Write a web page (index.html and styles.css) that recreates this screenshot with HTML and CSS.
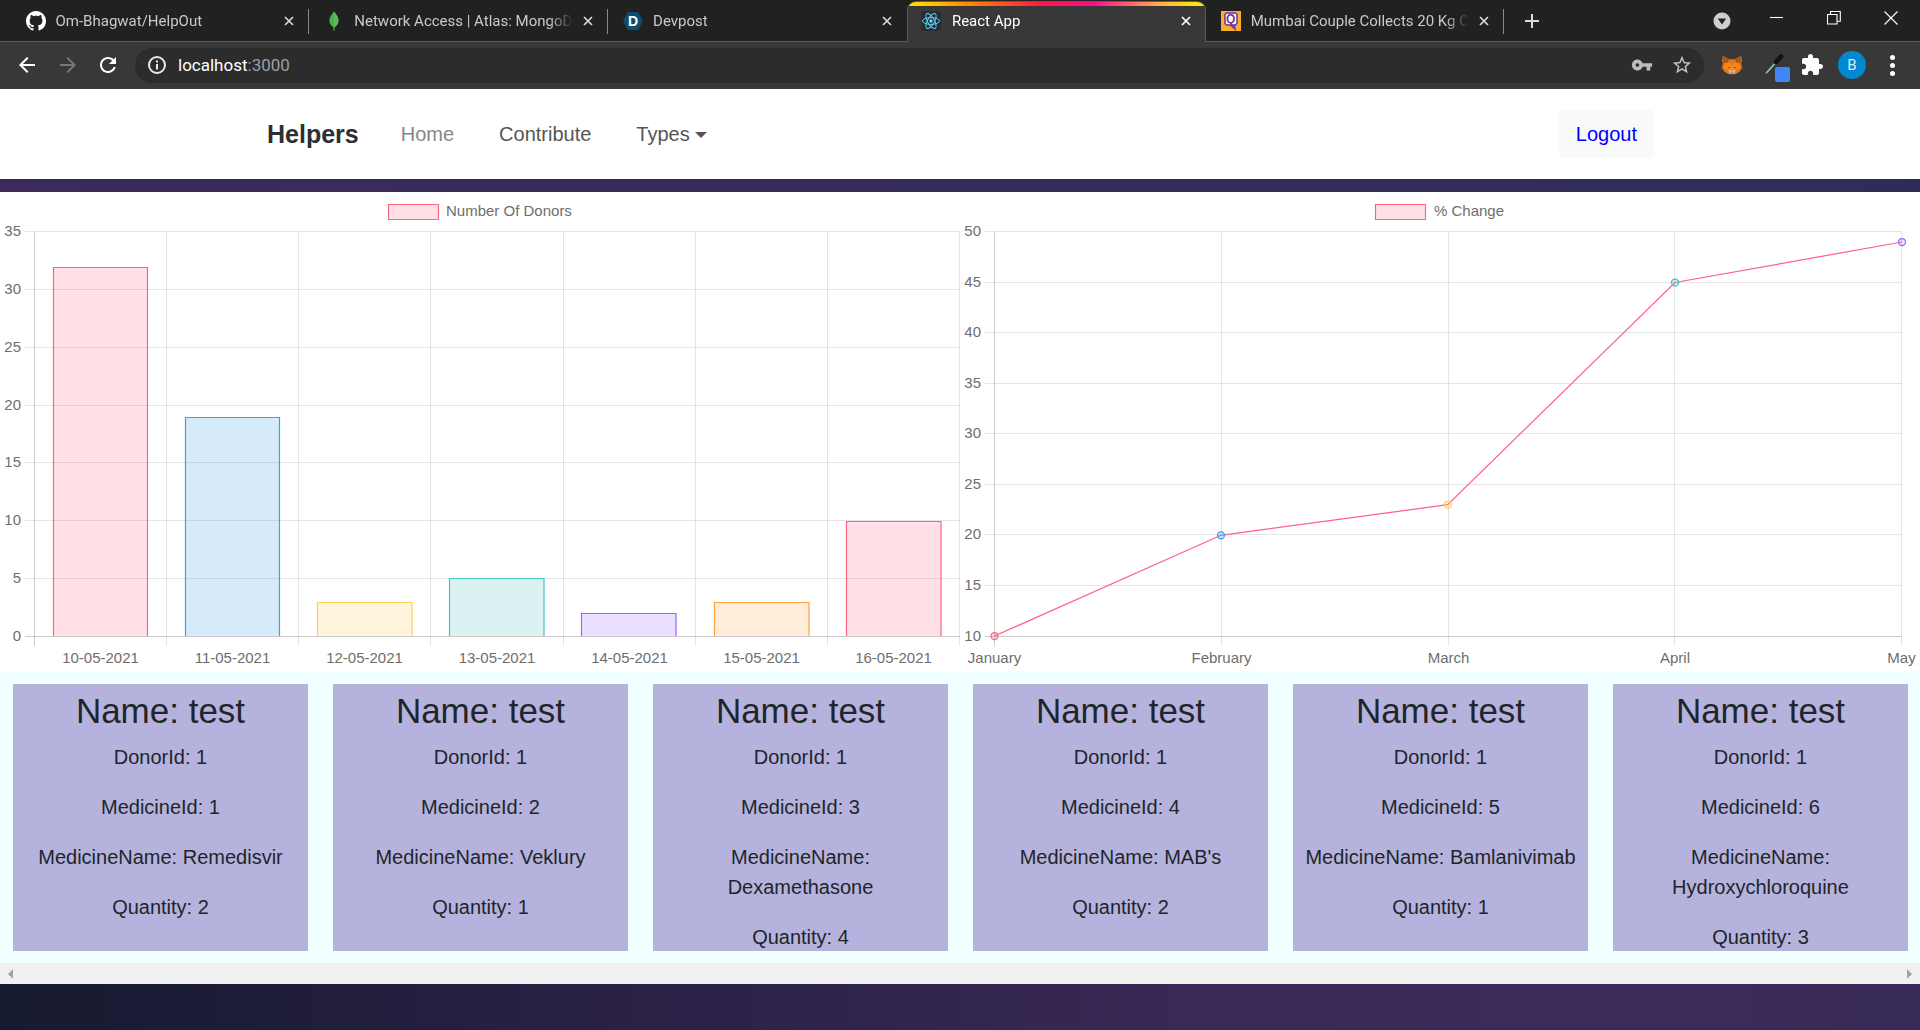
FILE: index.html
```html
<!DOCTYPE html>
<html lang="en">
<head>
<meta charset="utf-8">
<title>React App</title>
<link rel="stylesheet" href="styles.css">
</head>
<body>
<header class="browser">
  <div class="tabstrip">
    <div class="tab sep">
      <svg class="favicon" viewBox="0 0 16 16"><path fill="#fff" d="M8 0C3.58 0 0 3.58 0 8c0 3.54 2.29 6.53 5.47 7.59.4.07.55-.17.55-.38 0-.19-.01-.82-.01-1.49-2.01.37-2.53-.49-2.69-.94-.09-.23-.48-.94-.82-1.13-.28-.15-.68-.52-.01-.53.63-.01 1.08.58 1.23.82.72 1.21 1.87.87 2.33.66.07-.52.28-.87.51-1.07-1.78-.2-3.64-.89-3.64-3.95 0-.87.31-1.59.82-2.15-.08-.2-.36-1.02.08-2.12 0 0 .67-.21 2.2.82.64-.18 1.32-.27 2-.27.68 0 1.36.09 2 .27 1.53-1.04 2.2-.82 2.2-.82.44 1.1.16 1.92.08 2.12.51.56.82 1.27.82 2.15 0 3.07-1.87 3.75-3.65 3.95.29.25.54.73.54 1.48 0 1.07-.01 1.93-.01 2.2 0 .21.15.46.55.38A8.013 8.013 0 0016 8c0-4.42-3.58-8-8-8z"/></svg>
      <span class="tab-title">Om-Bhagwat/HelpOut</span>
      <svg class="tab-close" viewBox="0 0 10 10"><path d="M1 1l8 8M9 1l-8 8"/></svg>
    </div>
    <div class="tab sep">
      <svg class="favicon" viewBox="0 0 20 20"><path fill="#4caf50" d="M10 0c.6 2 4.6 5 4.6 9.6 0 3.6-2.6 6-3.9 6.7L10.400 20h-.8l-.3-3.700C8 15.600 5.400 13.200 5.400 9.600 5.400 5 9.400 2 10 0z"/><path fill="#7cc36a" d="M10 0c.3 3 .3 12 .1 17 2-2 4.500-4 4.500-7.400C14.600 5 10.600 2 10 0z" opacity=".5"/></svg>
      <span class="tab-title">Network Access | Atlas: MongoD</span>
      <svg class="tab-close" viewBox="0 0 10 10"><path d="M1 1l8 8M9 1l-8 8"/></svg>
    </div>
    <div class="tab">
      <span class="favicon fav-devpost">
        <svg class="fav-shape" viewBox="0 0 20 20"><path fill="#0f4d6e" d="M5 1h10l5 9-5 9H5L0 10z"/></svg>
        <b class="fav-letter">D</b>
      </span>
      <span class="tab-title">Devpost</span>
      <svg class="tab-close" viewBox="0 0 10 10"><path d="M1 1l8 8M9 1l-8 8"/></svg>
    </div>
    <div class="tab tab-active">
      <svg class="favicon" viewBox="0 0 20 20"><rect width="20" height="20" rx="2" fill="#282c34"/><g fill="none" stroke="#61dafb" stroke-width=".9"><ellipse cx="10" cy="10" rx="8.500" ry="3.400"/><ellipse cx="10" cy="10" rx="8.500" ry="3.400" transform="rotate(60 10 10)"/><ellipse cx="10" cy="10" rx="8.500" ry="3.400" transform="rotate(120 10 10)"/></g><circle cx="10" cy="10" r="1.700" fill="#61dafb"/></svg>
      <span class="tab-title">React App</span>
      <svg class="tab-close" viewBox="0 0 10 10"><path d="M1 1l8 8M9 1l-8 8"/></svg>
    </div>
    <div class="tab sep">
      <span class="favicon fav-quint">
        <svg class="fav-shape" viewBox="0 0 20 20"><rect width="20" height="20" fill="#f5b02e"/><path fill="#fff" stroke="#7b2d9b" stroke-width="1.500" d="M5.500 2h9l1.500 1.500v9L14.500 14H13l1 4-4.500-4h-4L4 12.500v-9z"/></svg>
        <b class="fav-q">Q</b>
      </span>
      <span class="tab-title">Mumbai Couple Collects 20 Kg C</span>
      <svg class="tab-close" viewBox="0 0 10 10"><path d="M1 1l8 8M9 1l-8 8"/></svg>
    </div>
    <svg class="newtab" viewBox="0 0 16 16"><path d="M8 1v14M1 8h14"/></svg>
    <div class="win-group">
      <svg class="tabsearch" viewBox="0 0 18 18"><circle cx="9" cy="9" r="8.500" fill="#cfcfcf"/><path d="M4.800 6.600h8.400L9 12.600z" fill="#222"/></svg>
      <span class="win-btn"><svg class="win-ic" viewBox="0 0 14 14"><path d="M1 6.500h13"/></svg></span>
      <span class="win-btn"><svg class="win-ic" viewBox="0 0 14 14"><path d="M.5 3.500h9.500v9.500H.5zM3.500 3.500v-3h9.800v9.800h-3.300"/></svg></span>
      <span class="win-btn"><svg class="win-ic" viewBox="0 0 14 14"><path d="M.5 .5l13 13M13.500 .5l-13 13"/></svg></span>
    </div>
  </div>
  <div class="toolbar">
    <span class="tool"><svg class="ic" viewBox="0 0 24 24"><path fill="#fff" d="M20 11H7.830l5.590-5.590L12 4l-8 8 8 8 1.410-1.410L7.830 13H20v-2z"/></svg></span>
    <span class="tool"><svg class="ic" viewBox="0 0 24 24"><path fill="#777" d="M4 11h12.170l-5.590-5.590L12 4l8 8-8 8-1.410-1.410L16.170 13H4v-2z"/></svg></span>
    <span class="tool"><svg class="ic" viewBox="0 0 24 24"><path fill="#fff" d="M17.650 6.350C16.200 4.900 14.210 4 12 4c-4.420 0-7.990 3.580-7.990 8s3.570 8 7.990 8c3.730 0 6.840-2.550 7.730-6h-2.080c-.82 2.330-3.040 4-5.650 4-3.310 0-6-2.690-6-6s2.690-6 6-6c1.660 0 3.140.69 4.220 1.780L13 11h7V4l-2.350 2.350z"/></svg></span>
    <div class="omnibox">
      <svg class="info" viewBox="0 0 20 20"><circle cx="10" cy="10" r="8" fill="none" stroke="#e8e8e8" stroke-width="2"/><path fill="#e8e8e8" d="M9 9h2v5.500H9zM9 5.500h2v2H9z"/></svg>
      <span class="url">localhost<span class="url-port">:3000</span></span>
      <svg class="omni-ic" viewBox="0 0 24 24"><path fill="#bdbdbd" d="M12.650 10C11.830 7.670 9.610 6 7 6c-3.310 0-6 2.690-6 6s2.690 6 6 6c2.610 0 4.830-1.670 5.650-4H17v4h4v-4h2v-4H12.650zM7 14c-1.100 0-2-.9-2-2s.9-2 2-2 2 .9 2 2-.9 2-2 2z"/></svg>
      <svg class="omni-ic" viewBox="0 0 24 24"><path fill="#c4c4c4" d="M22 9.240l-7.190-.62L12 2 9.190 8.630 2 9.240l5.460 4.730L5.820 21 12 17.270 18.180 21l-1.630-7.030L22 9.240zM12 15.400l-3.760 2.270 1-4.280-3.320-2.880 4.380-.38L12 6.100l1.710 4.040 4.380.38-3.320 2.880 1 4.280L12 15.400z"/></svg>
    </div>
    <div class="extensions">
      <span class="ext">
        <svg class="ext-fox" viewBox="0 0 24 24"><path fill="#e2761b" d="M1 1l8 4h6l8-4 1 6-1 3 1 6-3 4-5 3h-8l-5-3-3-4 1-6-1-3z"/><path fill="#a9561a" d="M1 1l8 4-3 5-5-1zM23 1l-8 4 3 5 5-1z"/><path fill="#f6851b" d="M4 10l5-1 3 4 3-4 5 1 2 6-5 2-5 2-5-2-5-2z"/><path fill="#d7c1b3" d="M8 18l4 1 4-1-1 4H9z"/><path fill="#3a2a20" d="M8 14l2 1-2 1zM16 14l-2 1 2 1zM11 20h2v1h-2z"/></svg>
      </span>
      <span class="ext">
        <svg class="ext-dropper" viewBox="0 0 40 30"><path stroke="#4caf50" stroke-width="2" d="M14.700 22.700l9-10"/><path stroke="#ccc" stroke-width="1" d="M13.700 23.700l9-10"/><path stroke="#111" stroke-width="4.500" stroke-linecap="round" d="M24 12l5-5.500"/></svg>
        <i class="ext-badge"></i>
      </span>
      <span class="ext"><svg class="ic" viewBox="0 0 24 24"><path fill="#fff" d="M20.500 11H19V7c0-1.100-.9-2-2-2h-4V3.500C13 2.120 11.880 1 10.500 1S8 2.120 8 3.500V5H4c-1.100 0-1.990.9-1.990 2v3.800H3.500c1.490 0 2.700 1.210 2.700 2.700s-1.210 2.700-2.700 2.700H2V20c0 1.100.9 2 2 2h3.800v-1.500c0-1.490 1.210-2.700 2.700-2.700 1.490 0 2.700 1.210 2.700 2.700V22H17c1.100 0 2-.9 2-2v-4h1.500c1.380 0 2.500-1.120 2.500-2.500S21.880 11 20.500 11z"/></svg></span>
      <span class="ext"><span class="avatar">B</span></span>
      <span class="ext"><span class="dots"><i></i><i></i><i></i></span></span>
    </div>
  </div>
</header>

<nav class="navbar">
  <a class="brand">Helpers</a>
  <a class="nav-link muted">Home</a>
  <a class="nav-link">Contribute</a>
  <a class="nav-link dropdown">Types</a>
  <a class="logout">Logout</a>
</nav>
<div class="strip"></div>

<section class="charts">
  <svg class="chart" viewBox="0 192 960 479">
    <path class="legend-box" d="M388.500 204.500h50v15h-50z"/>
    <text class="label" x="446" y="216">Number Of Donors</text>
    <path class="grid" d="M25 231.500H960M25 289.500H960M25 347.500H960M25 405.500H960M25 462.500H960M25 520.500H960M25 578.500H960"/>
    <path class="grid" d="M166.500 232V646M298.500 232V646M430.500 232V646M563.500 232V646M695.500 232V646M827.500 232V646M959.500 232V646"/>
    <path class="axis" d="M34.500 232V646M25 636.500H960"/>
    <g class="bars">
      <path class="bar pink" d="M53.500 636V267.500H147.500V636"/>
      <path class="bar blue" d="M185.500 636V417.500H279.500V636"/>
      <path class="bar yellow" d="M317.500 636V602.500H412V636"/>
      <path class="bar teal" d="M449.500 636V578.500H544V636"/>
      <path class="bar violet" d="M581.500 636V613.500H676V636"/>
      <path class="bar orange" d="M714.500 636V602.500H809V636"/>
      <path class="bar pink" d="M846.500 636V521.500H941V636"/>
    </g>
    <g class="ylabels">
      <text x="21" y="236">35</text><text x="21" y="294">30</text><text x="21" y="352">25</text><text x="21" y="410">20</text><text x="21" y="467">15</text><text x="21" y="525">10</text><text x="21" y="583">5</text><text x="21" y="641">0</text>
    </g>
    <g class="xlabels">
      <text x="100.500" y="663">10-05-2021</text><text x="232.500" y="663">11-05-2021</text><text x="364.500" y="663">12-05-2021</text><text x="497" y="663">13-05-2021</text><text x="629.500" y="663">14-05-2021</text><text x="761.500" y="663">15-05-2021</text><text x="893.500" y="663">16-05-2021</text>
    </g>
  </svg>
  <svg class="chart" viewBox="960 192 960 479">
    <path class="legend-box" d="M1375.500 204.500h50v15h-50z"/>
    <text class="label" x="1434" y="216">% Change</text>
    <path class="grid" d="M985 231.500H1902M985 282.500H1902M985 332.500H1902M985 383.500H1902M985 433.500H1902M985 484.500H1902M985 534.500H1902M985 585.500H1902"/>
    <path class="grid" d="M1221.500 232V646M1448.500 232V646M1674.500 232V646M1901.500 232V646"/>
    <path class="axis" d="M994.500 232V646M985 636.500H1902"/>
    <path class="line" d="M994.500 636L1221 535.300L1447.700 504.700L1675 282.500L1902 242"/>
    <circle class="pt pink" cx="994.500" cy="636" r="3.500"/>
    <circle class="pt blue" cx="1221" cy="535.300" r="3.500"/>
    <circle class="pt yellow" cx="1447.700" cy="504.700" r="3.500"/>
    <circle class="pt teal" cx="1675" cy="282.500" r="3.500"/>
    <circle class="pt violet" cx="1902" cy="242" r="3.500"/>
    <g class="ylabels">
      <text x="981" y="236">50</text><text x="981" y="287">45</text><text x="981" y="337">40</text><text x="981" y="388">35</text><text x="981" y="438">30</text><text x="981" y="489">25</text><text x="981" y="539">20</text><text x="981" y="590">15</text><text x="981" y="641">10</text>
    </g>
    <g class="xlabels">
      <text x="994.500" y="663">January</text><text x="1221.500" y="663">February</text><text x="1448.500" y="663">March</text><text x="1675" y="663">April</text><text x="1901.500" y="663">May</text>
    </g>
  </svg>
</section>

<section class="cards">
  <article class="card"><h1>Name: test</h1><p>DonorId: 1</p><p>MedicineId: 1</p><p>MedicineName: Remedisvir</p><p>Quantity: 2</p></article>
  <article class="card"><h1>Name: test</h1><p>DonorId: 1</p><p>MedicineId: 2</p><p>MedicineName: Veklury</p><p>Quantity: 1</p></article>
  <article class="card"><h1>Name: test</h1><p>DonorId: 1</p><p>MedicineId: 3</p><p>MedicineName: Dexamethasone</p><p>Quantity: 4</p></article>
  <article class="card"><h1>Name: test</h1><p>DonorId: 1</p><p>MedicineId: 4</p><p>MedicineName: MAB's</p><p>Quantity: 2</p></article>
  <article class="card"><h1>Name: test</h1><p>DonorId: 1</p><p>MedicineId: 5</p><p>MedicineName: Bamlanivimab</p><p>Quantity: 1</p></article>
  <article class="card"><h1>Name: test</h1><p>DonorId: 1</p><p>MedicineId: 6</p><p>MedicineName: Hydroxychloroquine</p><p>Quantity: 3</p></article>
</section>
<div class="hscroll"><i class="arrow-left"></i><i class="arrow-right"></i></div>
<div class="footer-band"></div>
</body>
</html>
```
FILE: styles.css
```css
* { box-sizing: border-box; }
html, body { margin: 0; height: 100%; }
body {
  width: 1920px;
  height: 1030px;
  overflow: hidden;
  display: flex;
  flex-direction: column;
  font-family: "Liberation Sans", Arial, sans-serif;
  background: #fff;
}

/* Browser chrome */
.browser { flex: none; height: 89px; background: #383838; }
.tabstrip {
  height: 42px;
  display: flex;
  padding-left: 10.500px;
  background: #212121;
  border-bottom: 1px solid #5c5c5c;
  font-family: Roboto, "Open Sans", sans-serif;
  font-size: 15px;
}
.tab {
  position: relative;
  width: 298.800px;
  height: 41px;
  display: flex;
  align-items: center;
  padding: 0 15px;
  color: #c6cacf;
}
.tab.sep::after {
  content: "";
  position: absolute;
  right: 0;
  top: 9px;
  height: 25px;
  width: 1px;
  background: #8a8a8a;
}
.tab-active {
  background: #383838;
  color: #fff;
  border-radius: 9px 9px 0 0;
  border: 1px solid #5c5c5c;
  border-bottom: 0;
  margin-top: 1px;
  padding: 0 14px 3px 13px;
  height: 41px;
  overflow: hidden;
}
.tab-active::before {
  content: "";
  position: absolute;
  left: 0;
  right: 0;
  top: 0;
  height: 4px;
  background: linear-gradient(90deg, #ffe600, #ff8a00 20%, #ff1744 45%, #ff0a8c 62%, #ffb04a 85%, #fff000);
}
.favicon { flex: none; width: 20px; height: 20px; margin-right: 10px; display: block; position: relative; }
.tab-active .favicon { margin-right: 11px; }
.fav-shape { display: block; width: 20px; height: 20px; }
.fav-letter {
  position: absolute;
  inset: 0;
  text-align: center;
  font: bold 14px/20px "Liberation Sans", sans-serif;
  color: #fff;
}
.fav-q {
  position: absolute;
  left: 0;
  top: -2px;
  width: 20px;
  text-align: center;
  font: bold 12px/20px "Liberation Sans", sans-serif;
  color: #7b2d9b;
}
.tab-title {
  flex: 1;
  min-width: 0;
  white-space: nowrap;
  overflow: hidden;
  -webkit-mask-image: linear-gradient(90deg, #000 calc(100% - 24px), transparent);
  mask-image: linear-gradient(90deg, #000 calc(100% - 24px), transparent);
}
.tab-close {
  flex: none;
  width: 10px;
  height: 10px;
  margin: 0 0 0 10px;
  fill: none;
  stroke: #d8d8d8;
  stroke-width: 1.700;
}
.tab-active .tab-close { stroke: #fff; }
.newtab {
  flex: none;
  width: 16px;
  height: 16px;
  margin: 13px 0 0 20px;
  fill: none;
  stroke: #dcdcdc;
  stroke-width: 2;
}
.win-group { margin-left: auto; display: flex; }
.tabsearch { width: 18px; height: 18px; margin: 12px 17px 0 0; flex: none; }
.win-btn { width: 57.500px; height: 36px; display: flex; align-items: center; justify-content: center; }
.win-ic { width: 14px; height: 14px; fill: none; stroke: #fff; stroke-width: 1.100; }

.toolbar { height: 47px; display: flex; align-items: center; padding: 0 0 1px 8px; }
.tool { width: 40px; height: 40px; display: flex; align-items: center; justify-content: center; flex: none; }
.tool:first-child { margin-left: -1px; margin-right: 1px; }
.ic { width: 24px; height: 24px; display: block; }
.omnibox {
  width: 1569px;
  height: 35px;
  margin-left: 7px;
  padding: 0 11px 0 12px;
  display: flex;
  align-items: center;
  background: #2c2c2c;
  border-radius: 18px;
  flex: none;
}
.info { width: 20px; height: 20px; flex: none; }
.url {
  flex: 1;
  margin-left: 11px;
  font: 17px Roboto, "Open Sans", sans-serif;
  color: #fff;
}
.url-port { color: #9aa0a6; }
.omni-ic { width: 22px; height: 22px; margin-left: 18px; flex: none; }
.extensions { display: flex; margin-left: 8px; }
.ext { width: 40px; height: 40px; position: relative; display: flex; align-items: center; justify-content: center; flex: none; }
.ext-fox { width: 20px; height: 20px; }
.ext-dropper { width: 40px; height: 30px; fill: none; }
.ext-badge {
  position: absolute;
  left: 23px;
  top: 22px;
  width: 15px;
  height: 15px;
  border-radius: 2px;
  background: #4285f4;
}
.avatar {
  width: 28px;
  height: 28px;
  border-radius: 50%;
  background: #0288d1;
  color: #d4ecfa;
  text-align: center;
  font: 15px/28px Roboto, sans-serif;
}
.dots { display: flex; flex-direction: column; gap: 3px; }
.dots i { display: block; width: 5px; height: 5px; border-radius: 50%; background: #fff; }

/* Site nav */
.navbar {
  flex: none;
  height: 90px;
  display: flex;
  align-items: center;
  padding: 0 266px 0 267px;
  background: #fff;
  font-size: 20px;
}
.brand { font-size: 25px; font-weight: 700; color: #2b2f33; margin-right: 42px; }
.nav-link { color: #555; margin-right: 45px; }
.muted { color: #878787; }
.dropdown::after {
  content: "";
  display: inline-block;
  margin-left: 5px;
  vertical-align: 3px;
  border-top: 6px solid #555;
  border-left: 6px solid transparent;
  border-right: 6px solid transparent;
}
.logout {
  margin-left: auto;
  height: 48px;
  padding: 0 17px;
  display: flex;
  align-items: center;
  color: #0000ff;
  background: #f8f9fa;
  border-radius: 5px;
}
.strip {
  flex: none;
  height: 13px;
  background: linear-gradient(90deg, #3b2a5a, #362c59 50%, #2e2d5a);
}

/* Charts */
.charts { flex: none; height: 479px; display: flex; background: #fff; }
.chart { flex: none; width: 960px; height: 479px; display: block; }
.chart text { font-size: 15px; fill: #6e6e6e; font-family: "Liberation Sans", Arial, sans-serif; }
.ylabels text { text-anchor: end; }
.xlabels text { text-anchor: middle; }
.grid { fill: none; stroke: rgba(0, 0, 0, .1); stroke-width: 1; }
.axis { fill: none; stroke: rgba(0, 0, 0, .2); stroke-width: 1; }
.legend-box { fill: rgba(255, 99, 132, .2); stroke: #ff6384; stroke-width: 1.200; }
.bar { stroke-width: 1.200; }
.bar.pink { fill: rgba(255, 99, 132, .2); stroke: #ff6384; }
.bar.blue { fill: rgba(54, 162, 235, .2); stroke: #36a2eb; }
.bar.yellow { fill: rgba(255, 206, 86, .2); stroke: #ffce56; }
.bar.teal { fill: rgba(75, 192, 192, .2); stroke: #4bc0c0; }
.bar.violet { fill: rgba(153, 102, 255, .2); stroke: #9966ff; }
.bar.orange { fill: rgba(255, 159, 64, .2); stroke: #ff9f40; }
.line { fill: none; stroke: #ff6384; stroke-width: 1.250; }
.pt { stroke-width: 1.250; }
.pt.pink { fill: rgba(255, 99, 132, .2); stroke: #ff6384; }
.pt.blue { fill: rgba(54, 162, 235, .2); stroke: #36a2eb; }
.pt.yellow { fill: rgba(255, 206, 86, .2); stroke: #ffce56; }
.pt.teal { fill: rgba(75, 192, 192, .2); stroke: #4bc0c0; }
.pt.violet { fill: rgba(153, 102, 255, .2); stroke: #9966ff; }

/* Cards */
.cards {
  flex: none;
  height: 292px;
  display: flex;
  gap: 25px;
  padding: 13px 12px 12px 13px;
  background: #f0ffff;
}
.card {
  flex: none;
  width: 295px;
  height: 267px;
  overflow: hidden;
  padding: 0 5px;
  text-align: center;
  background: #b5b3de;
  color: #212529;
}
.card h1 { margin: 0 0 5px; font-size: 35px; font-weight: 400; line-height: 53px; }
.card p { margin: 0 0 20px; font-size: 20px; line-height: 30px; }

.hscroll {
  flex: none;
  height: 21px;
  display: flex;
  align-items: center;
  justify-content: space-between;
  padding: 0 8px;
  background: #f1f1f1;
}
.arrow-left { border-right: 5px solid #a3a3a3; border-top: 5px solid transparent; border-bottom: 5px solid transparent; }
.arrow-right { border-left: 5px solid #a3a3a3; border-top: 5px solid transparent; border-bottom: 5px solid transparent; }
.footer-band {
  flex: 1;
  background: linear-gradient(90deg, #161a30, #2a2145 33%, #3a2a58 66%, #3c2b5a 85%, #382a58);
}
```
